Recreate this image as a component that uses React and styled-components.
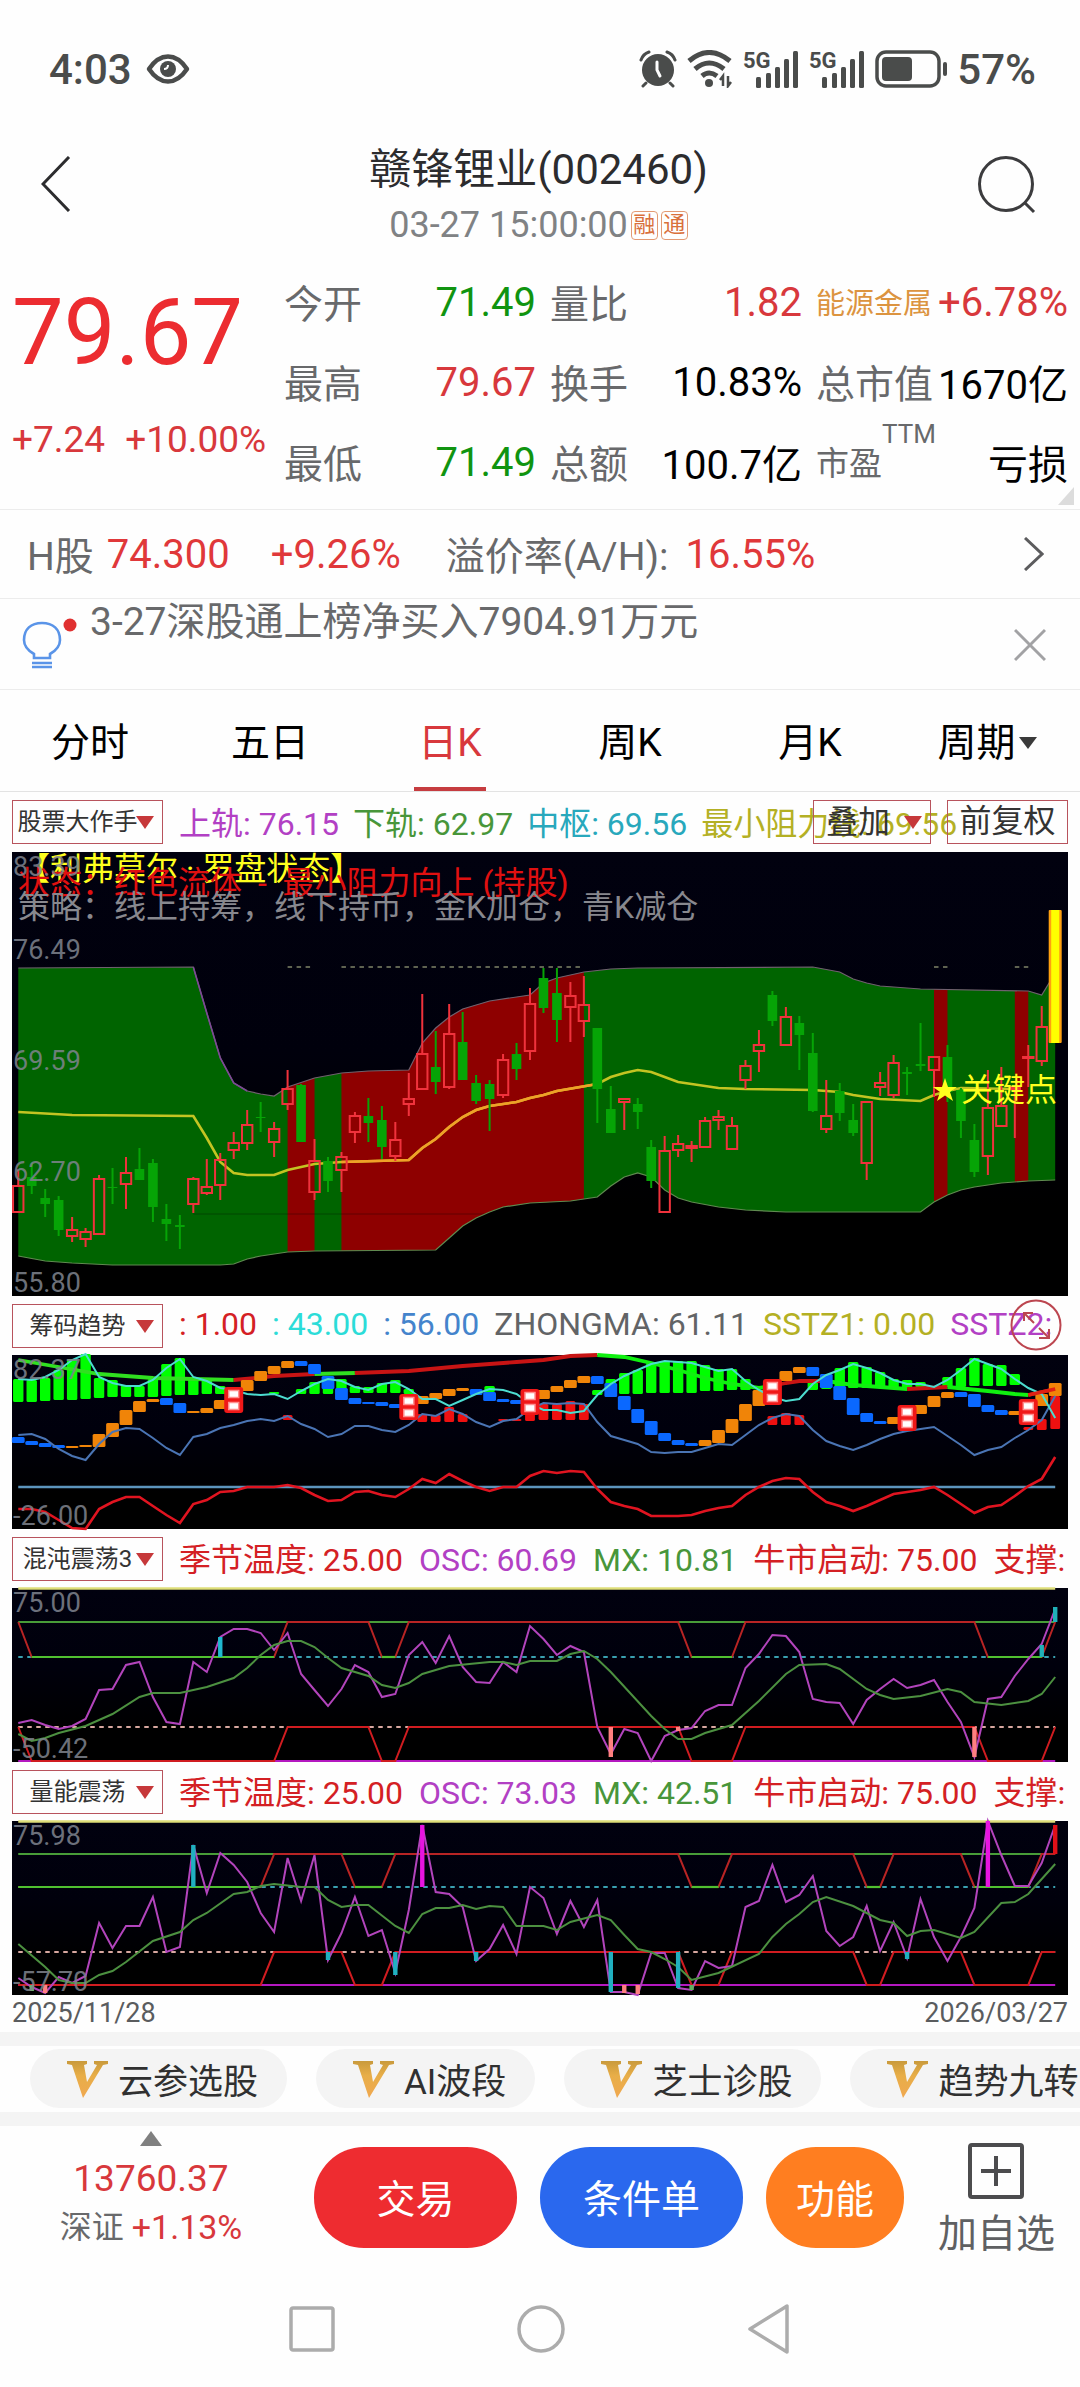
import { useState } from "react";
import styled, { createGlobalStyle, css } from "styled-components";

const GlobalStyle = createGlobalStyle`
    * {
        box-sizing: border-box;
    }
    body {
        margin: 0;
        background: #fefefe;
        color: #000;
        font-family: Roboto, "Noto Sans CJK SC", sans-serif;
    }
    button, select {
        font-family: inherit;
        margin: 0;
    }
`
const Page = styled.div`
    width: 100%;
    overflow: hidden;
`
const PlainButton = styled.button`
    display: flex;
    padding: 0;
    border: none;
    background: none;
    color: inherit;
`

/* status bar */
const StatusBar = styled.div`
    display: flex;
    align-items: center;
    justify-content: space-between;
    height: 138px;
    padding: 0 44px 0 49px;
    color: #4a4c4b;
    font-size: 42px;
    font-weight: 500;
`
const StatusGroup = styled.div`
    display: flex;
    align-items: center;
    gap: ${(props) => props.$gap}px;
`

/* header */
const Header = styled.header`
    display: grid;
    grid-template-columns: 58px 1fr 58px;
    align-items: start;
    height: 122px;
    padding: 0 44px 0 41px;
`
const HeaderButton = styled(PlainButton)`
    padding-top: 18px;
`
const HeaderText = styled.div`
    display: flex;
    flex-direction: column;
    align-items: center;
`
const StockName = styled.h1`
    margin: 0;
    font-size: 42px;
    font-weight: 400;
    line-height: 64px;
    color: #2c2c2e;
`
const StockTime = styled.div`
    display: flex;
    align-items: center;
    gap: 3px;
    font-size: 36px;
    line-height: 46px;
    color: #808284;
`
const Tag = styled.span`
    width: 27px;
    height: 29px;
    border: 1px solid #e39a74;
    border-radius: 4px;
    color: #d9703c;
    font-size: 22px;
    line-height: 26px;
    text-align: center;
`

/* quote */
const Quote = styled.section`
    position: relative;
    display: flex;
    padding: 2px 12px 7px;
    border-bottom: 1px solid #ececec;
`
const PriceBlock = styled.div`
    width: 272px;
    flex: none;
    color: #d8383c;
    white-space: pre;
`
const Price = styled.div`
    color: #ec2c30;
    font-size: 92px;
    line-height: 142px;
`
const Change = styled.div`
    display: flex;
    gap: 20px;
    font-size: 37px;
    line-height: 72px;
`
const QuoteGrid = styled.dl`
    flex: 1;
    display: grid;
    grid-template-columns: repeat(3, 1fr);
    column-gap: 14px;
    margin: 0;
`
const QuoteCell = styled.div`
    display: flex;
    align-items: center;
    justify-content: space-between;
    height: 80px;
    white-space: nowrap;
`
const QuoteLabel = styled.dt`
    display: flex;
    padding-bottom: 3px;
    color: ${(props) => props.$color || "#68696b"};
    font-size: ${(props) => props.$size || 39}px;
`
const QuoteValue = styled.dd`
    margin: 0;
    color: ${(props) => props.$color || "#000"};
    font-size: 40px;
`
const Sup = styled.sup`
    font-size: 26px;
    line-height: 26px;
    margin-top: -16px;
`
const Corner = styled.i`
    position: absolute;
    right: 6px;
    bottom: 4px;
    border-left: 16px solid transparent;
    border-bottom: 18px solid #dcdcdc;
`

/* H share and notice rows */
const HShareRow = styled.div`
    display: flex;
    align-items: center;
    height: 89px;
    padding: 0 36px 0 27px;
    border-bottom: 1px solid #ececec;
    white-space: pre;
`
const HText = styled.span`
    padding-bottom: ${(props) => (props.$muted ? 3 : 0)}px;
    color: ${(props) => (props.$muted ? "#68696b" : "#e0383a")};
    font-size: ${(props) => (props.$muted ? 39 : 40)}px;
    margin-right: ${(props) => props.$gap}px;
`
const Push = styled.span`
    margin-left: auto;
    display: flex;
`
const NoticeRow = styled.div`
    display: flex;
    height: 91px;
    padding: 0 34px 0 20px;
    border-bottom: 1px solid #ececec;
    color: #68696b;
    font-size: 39px;
    line-height: 46px;
`
const NoticeIcon = styled.span`
    width: 70px;
    padding-top: 18px;
`

/* period tabs */
const Tabs = styled.nav`
    display: grid;
    grid-template-columns: repeat(6, 1fr);
    border-bottom: 1px solid #e3e3e3;
`
const Tab = styled.button`
    display: flex;
    align-items: center;
    justify-content: center;
    height: 101px;
    padding: 0 0 3px;
    border: none;
    background: none;
    font-size: 39px;
    color: ${(props) => (props.$active ? "#d8383c" : "#000")};
    ${(props) =>
        props.$active &&
        css`
            background: linear-gradient(#c63c40, #c63c40) center bottom / 72px 4px no-repeat;
        `}
`
const TabArrow = styled.i`
    margin: 8px 6px 0 3px;
    border: 9px solid transparent;
    border-top: 12px solid #3a3a3a;
    border-bottom: none;
`

/* indicator rows */
const IndicatorRow = styled.div`
    position: relative;
    display: flex;
    align-items: center;
    gap: 16px;
    height: ${(props) => (props.$tall ? 60 : 59)}px;
    padding: 0 12px;
    overflow: hidden;
`
const SelectWrap = styled.label`
    position: relative;
    display: block;
    flex: none;
    &::after {
        content: "";
        position: absolute;
        right: 9px;
        top: 16px;
        border: 9px solid transparent;
        border-top: 13px solid #c6383a;
        border-bottom: none;
        pointer-events: none;
    }
`
const boxed = css`
    height: 44px;
    border: 1px solid #b8535c;
    border-radius: 0;
    color: #333;
`
const Select = styled.select`
    ${boxed}
    display: block;
    appearance: none;
    width: ${(props) => (props.$wide ? 118 : 151)}px;
    padding: ${(props) => (props.$wide ? "0 28px 0 0" : "0 22px 0 2px")};
    background: ${(props) => (props.$wide ? "transparent" : "#fefefe")};
    font-size: ${(props) => (props.$wide ? 32 : 24)}px;
    text-align: center;
    text-align-last: center;
`
const Legend = styled.div`
    display: flex;
    align-items: baseline;
    gap: ${(props) => props.$gap}px;
    padding-bottom: 3px;
    font-size: 32px;
    white-space: pre;
`
const LegendItem = styled.span`
    color: ${(props) => props.$color};
`
const RowActions = styled.div`
    position: absolute;
    right: 12px;
    top: 8px;
    display: flex;
    gap: 16px;
`
const BoxButton = styled.button`
    ${boxed}
    width: 121px;
    padding: 0 0 2px;
    background: transparent;
    font-size: 32px;
    line-height: 38px;
`
const ExpandButton = styled(PlainButton)`
    position: absolute;
    right: 18px;
    top: 3px;
`

/* chart panels */
const Panel = styled.div`
    position: relative;
    height: ${(props) => props.$height}px;
    margin: 0 12px;
    background: linear-gradient(#01010f, #00000c 45%, #000 80%);
`
const Plot = styled.svg`
    display: block;
    width: 100%;
    height: 100%;
    overflow: visible;
`
const Axis = styled.div`
    position: absolute;
    inset: 1px auto -1px 1px;
    display: grid;
    grid-auto-rows: 1fr;
    color: #7f848e;
    font-size: 27px;
    line-height: 28px;
    opacity: 0.85;
`
const AxisCell = styled.div`
    display: flex;
    flex-direction: column;
    justify-content: ${(props) => (props.$both ? "space-between" : "flex-end")};
`
const PanelText = styled.div`
    position: absolute;
    left: 6px;
    top: ${(props) => props.$top}px;
    color: ${(props) => props.$color};
    font-size: 32px;
    line-height: 32px;
    white-space: pre;
`
const KeyPoint = styled.div`
    position: absolute;
    right: 11px;
    top: 222px;
    display: flex;
    align-items: center;
    gap: 4px;
    color: #ffff1e;
    font-size: 32px;
    line-height: 32px;
`
const Dates = styled.div`
    display: flex;
    justify-content: space-between;
    padding: 0 12px;
    font-size: 27px;
    line-height: 37px;
    color: #5a5c5e;
`

/* strategy chips */
const Chips = styled.div`
    display: flex;
    gap: 29px;
    padding: 3px 0 4px 30px;
    border-top: 14px solid #f4f4f4;
    border-bottom: 14px solid #f4f4f4;
    overflow: hidden;
`
const Chip = styled.button`
    flex: none;
    display: flex;
    align-items: center;
    gap: 10px;
    height: 59px;
    padding: 0 29px 0 37px;
    border: none;
    border-radius: 30px;
    background: #f4f4f4;
    color: #303030;
    font-size: 35px;
`

/* bottom bar */
const BottomBar = styled.footer`
    display: flex;
    align-items: flex-start;
    height: 145px;
    padding-right: 25px;
`
const Index = styled.div`
    width: 302px;
    flex: none;
    display: flex;
    flex-direction: column;
    align-items: center;
    padding-top: 5px;
    color: #d8383c;
    font-size: 37px;
    line-height: 66px;
`
const UpArrow = styled.i`
    border: 11px solid transparent;
    border-bottom: 15px solid #808080;
    border-top: none;
`
const IndexChange = styled.div`
    display: flex;
    gap: 8px;
    font-size: 34px;
    line-height: 30px;
`
const IndexName = styled.span`
    color: #68696b;
    font-size: 32px;
`
const Actions = styled.div`
    flex: 1;
    display: flex;
    gap: 23px;
    padding: 21px 34px 0 12px;
`
const ActionButton = styled.button`
    flex: ${(props) => props.$grow};
    height: 101px;
    padding: 0 0 3px;
    border: none;
    border-radius: 50px;
    background: ${(props) => props.$color};
    color: #fff;
    font-size: 39px;
`
const AddButton = styled(PlainButton)`
    flex-direction: column;
    align-items: center;
    gap: 6px;
    padding-top: 17px;
    color: #5f6062;
    font-size: 39px;
    line-height: 58px;
`
const NavBar = styled.nav`
    display: flex;
    align-items: center;
    justify-content: center;
    gap: 182px;
    height: 116px;
`

/* chart helpers: one step for every trading day */
const xOf = (i) => 6.25 + i * 13.467;
const toPoints = (list) => list.map(([i, y]) => `${xOf(i).toFixed(1)},${y}`).join(" ");

const RED = "#f0323c";
const GREEN = "#06a406";

// kind, high, body top, body bottom, low
const candles = [
    ["r", 318, 334, 360, 360], ["g", 311, 325, 334, 342], ["g", 337, 346, 352, 365], ["g", 344, 348, 378, 384],
    ["r", 365, 378, 384, 390], ["r", 376, 380, 387, 395], ["r", 323, 327, 382, 382], ["g", 316, 335, 336, 352],
    ["r", 305, 321, 332, 357], ["g", 296, 317, 328, 328], ["g", 307, 311, 355, 370], ["g", 352, 367, 372, 389],
    ["g", 363, 373, 375, 397], ["r", 325, 327, 352, 361], ["r", 307, 335, 341, 343], ["r", 301, 308, 333, 348],
    ["r", 280, 291, 298, 307], ["r", 258, 273, 291, 298], ["g", 250, 265, 266, 280], ["r", 270, 277, 290, 305],
    ["r", 218, 237, 252, 258], ["g", 232, 233, 290, 290], ["r", 287, 309, 340, 348], ["g", 305, 309, 329, 340],
    ["r", 300, 305, 318, 340], ["r", 260, 264, 280, 291], ["g", 246, 264, 271, 290], ["g", 254, 268, 295, 307],
    ["r", 270, 288, 304, 309], ["r", 221, 247, 252, 264], ["r", 142, 202, 237, 237], ["g", 179, 215, 230, 242],
    ["r", 152, 182, 235, 237], ["g", 160, 190, 228, 228], ["g", 223, 231, 249, 252], ["g", 228, 232, 247, 279],
    ["r", 202, 208, 243, 246], ["g", 191, 202, 217, 228], ["r", 136, 152, 199, 208], ["g", 116, 126, 156, 161],
    ["g", 116, 141, 168, 190], ["r", 130, 144, 155, 190], ["r", 124, 153, 169, 185], ["g", 176, 176, 237, 271],
    ["g", 234, 257, 281, 281], ["r", 247, 247, 250, 278], ["g", 246, 252, 260, 277], ["g", 288, 295, 329, 336],
    ["r", 284, 299, 360, 360], ["r", 283, 292, 298, 305], ["r", 289, 294, 296, 310], ["r", 265, 269, 295, 296],
    ["r", 258, 265, 268, 278], ["r", 265, 274, 297, 298], ["r", 208, 214, 228, 237], ["r", 178, 193, 199, 220],
    ["g", 139, 143, 169, 174], ["r", 155, 165, 193, 193], ["g", 164, 171, 183, 218], ["g", 181, 201, 259, 260],
    ["r", 228, 264, 277, 281], ["g", 231, 239, 261, 269], ["g", 252, 268, 281, 284], ["r", 250, 250, 311, 328],
    ["r", 220, 231, 235, 244], ["r", 203, 211, 243, 246], ["g", 215, 220, 222, 243], ["g", 171, 212, 214, 219],
    ["r", 204, 205, 218, 245], ["g", 193, 205, 240, 250], ["g", 236, 238, 269, 286], ["g", 272, 288, 320, 325],
    ["r", 218, 256, 304, 323], ["r", 215, 254, 274, 274], ["r", 235, 235, 237, 286], ["r", 193, 205, 206, 235],
    ["r", 154, 175, 209, 214],
];
const upper = [
    [0, 116], [13, 115], [14, 161], [15, 206], [16, 231], [17, 239], [18, 242], [19, 244], [20, 235], [22, 226],
    [24, 221], [26, 219], [29, 218], [30, 191], [31, 176], [32, 165], [33, 157], [35, 149], [38, 143], [39, 131],
    [40, 126], [42, 120], [44, 117], [46, 116], [59, 115], [61, 120], [62, 127], [63, 131], [64, 134], [67, 137],
    [75, 139], [76, 143], [77, 121],
];
const lower = [
    [0, 404], [2, 409], [4, 411], [7, 413], [15, 413], [16, 412], [17, 407], [18, 404], [20, 400], [22, 399],
    [31, 398], [32, 386], [33, 374], [34, 366], [35, 360], [36, 355], [38, 351], [41, 349], [43, 345], [44, 334],
    [45, 325], [46, 321], [47, 325], [48, 338], [49, 346], [50, 350], [52, 355], [54, 358], [57, 360], [67, 360],
    [68, 350], [69, 343], [70, 338], [71, 335], [73, 331], [75, 329], [77, 328],
];
const middle = [
    [0, 260], [4, 263], [13, 264], [14, 286], [15, 310], [16, 321], [17, 323], [19, 323], [20, 318], [22, 312],
    [24, 310], [29, 308], [30, 296], [31, 287], [32, 275], [33, 265], [34, 258], [35, 254], [37, 250], [38, 246],
    [39, 243], [40, 239], [43, 232], [44, 225], [45, 221], [46, 218], [47, 220], [48, 225], [49, 230], [50, 232],
    [52, 236], [54, 237], [59, 238], [61, 240], [62, 243], [64, 247], [67, 249], [68, 243], [69, 239], [70, 236],
    [74, 237],
];
const redZones = [[20, 22], [24, 42], [68, 69], [74, 75]];

const Candle = ({ i, data }) => {
    const [kind, high, top, bottom, low] = data;
    const x = xOf(i);
    const color = kind === "r" ? RED : GREEN;
    if (kind === "g") {
        return (
            <g stroke={color} strokeWidth="2">
                <path d={`M${x} ${high}V${low}`} />
                <rect x={x - 4.8} y={top} width="9.6" height={bottom - top} fill={color} stroke="none" />
            </g>
        );
    }
    return (
        <g stroke={color} strokeWidth="2" fill="none">
            <path d={`M${x} ${high}V${top}M${x} ${bottom}V${low}`} />
            <rect x={x - 5.2} y={top} width="10.4" height={bottom - top} />
        </g>
    );
};

const MainChart = () => (
    <Plot viewBox="0 0 1056 444" preserveAspectRatio="none">
        <defs>
            <clipPath id="band">
                <polygon points={`${toPoints(upper)} ${toPoints([...lower].reverse())}`} />
            </clipPath>
        </defs>
        <g clipPath="url(#band)">
            <rect width="1056" height="444" fill="#006400" />
            {redZones.map(([from, to]) => (
                <rect key={from} x={xOf(from)} width={xOf(to) - xOf(from)} height="444" fill="#8e0000" />
            ))}
            <path d={`M${xOf(13)} 362H${xOf(35)}`} stroke="#000" strokeOpacity="0.3" />
        </g>
        <g fill="none">
            <polyline points={toPoints(upper)} stroke="#70606f" strokeWidth="1.2" />
            <polyline points={toPoints(upper.slice(1, 6))} stroke="#7c4a94" strokeWidth="1.6" />
            <polyline points={toPoints(lower)} stroke="#5f8a50" strokeWidth="1.2" />
            {redZones.map(([from, to]) => (
                <path key={from} d={`M${xOf(from)} 115H${xOf(to)}`} stroke="#7f8468" strokeWidth="1.6" strokeDasharray="4.5 4.5" />
            ))}
            <polyline points={toPoints(middle)} stroke="#c3c422" strokeWidth="2.6" />
            <polyline points={toPoints(middle.filter(([i]) => i >= 24 && i <= 43))} stroke="#f0a028" strokeWidth="2.6" />
        </g>
        {candles.map((item, i) => <Candle key={i} i={i} data={item} />)}
        <rect x={xOf(77) - 6.5} y="58" width="13" height="133" rx="1" fill="#ffa010" />
        <rect x={xOf(77) - 4} y="58" width="8" height="133" fill="#ffff00" />
    </Plot>
);

const greenBars = [
    [0, 24, 47], [1, 25, 47], [2, 23, 46], [3, 15, 45], [4, 4, 45], [5, -1, 44], [6, 23, 43], [7, 25, 42], [8, 30, 42],
    [9, 31, 42], [10, 24, 42], [11, 9, 41], [12, 3, 40], [13, 22, 40], [14, 24, 39], [15, 31, 39], [19, 37, 39],
    [21, 34, 39], [22, 27, 39], [23, 22, 39], [24, 24, 38], [25, 31, 38], [26, 32, 38], [27, 28, 38], [28, 25, 38],
    [29, 34, 39], [35, 31, 37], [43, 35, 40], [44, 24, 40], [45, 18, 39], [46, 15, 39], [47, 8, 38], [48, 6, 38],
    [49, 6, 38], [50, 6, 38], [51, 10, 36], [52, 14, 36], [53, 14, 35], [54, 24, 35], [59, 25, 35], [60, 19, 34],
    [61, 13, 33], [62, 7, 33], [63, 12, 33], [64, 17, 33], [65, 24, 33], [66, 25, 33], [67, 27, 32], [69, 22, 32],
    [70, 13, 32], [71, 3, 31], [72, 9, 31], [73, 10, 31], [74, 19, 30],
];
const redBars = [
    [20, 60, 65], [30, 59, 67], [31, 60, 67], [32, 52, 67], [33, 59, 67], [36, 64, 66], [37, 64, 66], [38, 58, 66],
    [39, 49, 65], [40, 49, 65], [41, 46, 65], [42, 49, 65], [56, 61, 70], [57, 58, 70], [58, 60, 70], [75, 72, 75],
    [76, 64, 75], [77, 41, 74],
];
const orangeBlocks = [
    [4, 91, 93], [5, 90, 92], [6, 79, 92], [7, 68, 82], [8, 55, 70], [9, 46, 57], [10, 44, 47], [13, 56, 58],
    [14, 53, 58], [15, 45, 54], [17, 25, 36], [18, 16, 26], [19, 11, 19], [20, 6, 13], [30, 41, 49], [31, 38, 44],
    [32, 34, 41], [33, 33, 36], [39, 35, 44], [40, 31, 37], [41, 25, 33], [42, 21, 28], [51, 85, 91], [52, 75, 88],
    [53, 64, 78], [54, 49, 66], [55, 35, 51], [57, 16, 26], [58, 12, 18], [65, 62, 69], [67, 50, 59], [68, 41, 52],
    [69, 37, 43], [74, 56, 60], [76, 39, 51], [77, 28, 41],
];
const blueBlocks = [
    [0, 82, 88], [1, 86, 90], [2, 88, 92], [3, 90, 93], [11, 43, 50], [12, 48, 58], [21, 6, 11], [22, 9, 19],
    [23, 21, 34], [24, 33, 45], [25, 43, 49], [26, 47, 49], [27, 47, 51], [28, 49, 53], [34, 34, 40], [35, 37, 46],
    [36, 44, 47], [37, 45, 49], [43, 21, 29], [44, 28, 42], [45, 41, 55], [46, 54, 68], [47, 66, 80], [48, 78, 86],
    [49, 85, 90], [50, 88, 91], [59, 12, 21], [60, 19, 33], [61, 31, 45], [62, 43, 60], [63, 58, 67], [64, 66, 69],
    [70, 37, 42], [71, 39, 52], [72, 50, 57], [73, 55, 60],
];
const signals = [[16, 32], [29, 39], [38, 34], [56, 24], [66, 50], [75, 44]];
const cyanLine = [
    24, 25, 22, 15, 5, -1, 22, 28, 31, 31, 25, 13, 4, 22, 26, 33, 35, 39, 40, 39, 44, 36, 29, 24, 26, 32, 35, 29, 27,
    34, 44, 44, 51, 45, 39, 34, 35, 39, 49, 55, 55, 58, 56, 40, 29, 21, 15, 9, 6, 7, 8, 12, 16, 14, 26, 35, 42, 46,
    44, 29, 20, 15, 9, 13, 18, 25, 29, 29, 32, 25, 15, 4, 9, 14, 24, 33, 39, 63,
].map((y, i) => [i, y]);
const steelLine = [
    80, 79, 84, 94, 101, 105, 89, 77, 73, 74, 83, 93, 100, 82, 79, 73, 70, 66, 64, 66, 61, 69, 74, 82, 79, 71, 71,
    75, 77, 70, 59, 61, 54, 59, 67, 72, 66, 64, 54, 48, 49, 48, 49, 67, 81, 85, 89, 97, 98, 97, 97, 93, 89, 90, 80,
    70, 63, 59, 61, 75, 86, 91, 95, 90, 84, 79, 76, 74, 72, 81, 90, 100, 95, 92, 83, 75, 65, 41,
].map((y, i) => [i, y]);
const redLine = [
    154, 154, 157, 165, 173, 174, 154, 147, 142, 142, 151, 160, 168, 149, 145, 137, 136, 132, 132, 132, 130, 133,
    140, 146, 145, 137, 136, 140, 142, 134, 124, 128, 119, 126, 132, 136, 132, 132, 121, 116, 118, 116, 117, 134,
    147, 151, 154, 161, 161, 161, 160, 156, 153, 151, 140, 132, 126, 123, 124, 137, 147, 151, 156, 151, 145, 139,
    137, 135, 132, 140, 149, 158, 152, 150, 141, 131, 124, 102,
].map((y, i) => [i, y]);
const trend = [
    ["#30e020", [[0, 5], [3, 12], [6, 19], [10, 23], [16, 25]]],
    ["#c81414", [[16, 25], [19, 21], [22, 19]]],
    ["#30e020", [[22, 19], [25, 18]]],
    ["#c81414", [[25, 18], [29, 16], [33, 11], [37, 7], [39, 5], [41, 1], [43, 0]]],
    ["#10f010", [[43, 0], [45, 2], [47, 8], [49, 15], [51, 23], [53, 29], [55, 33], [56, 31]]],
    ["#c81414", [[56, 31], [57, 28], [58, 26], [60, 26]]],
    ["#10f010", [[60, 26], [62, 30], [66, 34]]],
    ["#c81414", [[66, 34], [69, 32]]],
    ["#10f010", [[69, 32], [72, 36], [74, 39], [75, 40]]],
    ["#e02014", [[75, 40], [77, 34]]],
];

const Bars = ({ list, width, color }) => (
    <g fill={color}>
        {list.map(([i, top, bottom]) => (
            <rect key={i} x={xOf(i) - width / 2} y={top} width={width} height={bottom - top} rx="1.5" />
        ))}
    </g>
);

const ChipChart = () => (
    <Plot viewBox="0 0 1056 174" preserveAspectRatio="none">
        <Bars list={greenBars} width={10.4} color="#00ff00" />
        <Bars list={redBars} width={9.8} color="#ee1010" />
        {trend.map(([color, list], i) => (
            <polyline key={i} points={toPoints(list)} fill="none" stroke={color} strokeWidth="3.8" />
        ))}
        <Bars list={blueBlocks} width={12.8} color="#0a68ff" />
        <Bars list={orangeBlocks} width={12.8} color="#f08408" />
        <g fill="none">
            <polyline points={toPoints(steelLine)} stroke="#4a74b4" strokeWidth="2" />
            <polyline points={toPoints(cyanLine)} stroke="#4cdcd0" strokeWidth="2" />
            <path d={`M${xOf(0)} 132H${xOf(77)}`} stroke="#5c94bc" strokeWidth="2.4" />
            <polyline points={toPoints(redLine)} stroke="#e01420" strokeWidth="2.6" />
            {trend.slice(-1).map(([color, list]) => (
                <polyline key="end" points={toPoints(list)} stroke={color} strokeWidth="3.8" />
            ))}
        </g>
        {signals.map(([i, y]) => (
            <g key={i}>
                <rect x={xOf(i) - 9.5} y={y} width="19" height="26" rx="3" fill="#f01818" />
                <rect x={xOf(i) - 5} y={y + 3.5} width="10" height="7" fill="#fff" stroke="#ff9090" strokeWidth="1.5" />
                <rect x={xOf(i) - 5} y={y + 15.5} width="10" height="7" fill="#fff" stroke="#ff9090" strokeWidth="1.5" />
            </g>
        ))}
    </Plot>
);

const calm = {
    levels: [34, 69, 139, 173],
    steps: [[0, 0], [1, 1], [19, 1], [20, 0], [26, 0], [27, 1], [28, 1], [29, 0], [49, 0], [50, 1], [53, 1], [54, 0], [71, 0], [72, 1], [76, 1], [77, 0]],
    osc: [
        135, 132, 137, 141, 138, 131, 102, 101, 77, 74, 109, 134, 136, 74, 84, 49, 41, 41, 45, 62, 45, 86, 102, 118,
        101, 77, 84, 109, 106, 67, 54, 75, 48, 79, 94, 95, 74, 84, 38, 51, 67, 58, 64, 139, 166, 141, 145, 173, 148,
        142, 140, 123, 117, 117, 80, 66, 47, 48, 64, 111, 114, 115, 136, 112, 101, 91, 100, 97, 92, 114, 134, 169,
        111, 109, 88, 71, 56, 21,
    ].map((y, i) => [i, y]),
    mx: [
        [0, 146], [1, 153], [2, 150], [3, 145], [5, 138], [7, 126], [9, 109], [10, 105], [12, 105], [14, 99], [16, 90],
        [17, 80], [18, 67], [19, 57], [20, 53], [21, 53], [22, 59], [23, 70], [24, 80], [26, 88], [27, 97], [28, 100],
        [29, 95], [30, 86], [32, 78], [35, 74], [36, 74], [37, 77], [38, 73], [40, 73], [41, 66], [42, 63], [43, 71],
        [44, 84], [47, 128], [48, 141], [49, 151], [50, 151], [51, 145], [53, 137], [55, 113], [57, 86], [58, 77],
        [60, 76], [61, 81], [63, 101], [64, 107], [65, 111], [67, 108], [69, 101], [70, 104], [71, 114], [73, 117],
        [75, 113], [76, 106], [77, 89],
    ],
    marks: [[15, 49, 69, "#20b8d0"], [44, 139, 169, "#ff8080"], [49, 139, 143, "#ff8080"], [71, 139, 169, "#ff8080"], [76, 57, 69, "#20b0b8"], [77, 19, 34, "#20b0b8"]],
};
const energy = {
    levels: [33, 66, 131, 164],
    steps: [[0, 1], [18, 1], [19, 0], [24, 0], [25, 1], [27, 1], [28, 0], [49, 0], [50, 1], [52, 1], [53, 0], [62, 0], [63, 1], [64, 1], [65, 0], [70, 0], [71, 1], [75, 1], [76, 0], [77, 0]],
    osc: [
        157, 166, 172, 156, 162, 155, 102, 127, 105, 105, 76, 131, 126, 24, 72, 32, 44, 61, 92, 111, 37, 80, 34, 139,
        112, 76, 115, 109, 152, 89, 4, 71, 73, 86, 140, 128, 104, 133, 66, 77, 113, 80, 106, 79, 171, 171, 174, 132,
        132, 167, 169, 140, 147, 145, 86, 80, 44, 81, 74, 55, 110, 125, 116, 85, 130, 101, 137, 78, 116, 140, 116,
        87, 0, 34, 65, 65, 42, 4,
    ].map((y, i) => [i, y]),
    mx: [
        [0, 123], [2, 146], [3, 159], [4, 162], [5, 162], [6, 154], [7, 150], [8, 141], [10, 120], [12, 111], [13, 99],
        [14, 92], [16, 73], [17, 71], [18, 65], [19, 63], [21, 66], [22, 66], [23, 79], [24, 86], [25, 84], [26, 84],
        [28, 105], [29, 112], [30, 93], [31, 87], [32, 87], [33, 84], [34, 88], [35, 85], [36, 86], [37, 105],
        [39, 105], [40, 109], [41, 101], [43, 94], [44, 99], [45, 114], [46, 128], [47, 131], [48, 138], [49, 146],
        [50, 159], [52, 152], [55, 133], [56, 116], [57, 103], [58, 93], [59, 81], [60, 76], [62, 85], [64, 99],
        [65, 102], [66, 115], [67, 110], [68, 109], [70, 117], [71, 111], [73, 82], [74, 81], [75, 73], [77, 43],
    ],
    marks: [
        [1, 164, 170, "#70b070"], [2, 164, 172, "#ff8080"], [13, 24, 66, "#20b0c0"], [23, 131, 139, "#20b0c0"],
        [28, 131, 154, "#20b0c0"], [30, 4, 66, "#e814e0"], [34, 131, 140, "#20b0c0"], [44, 131, 171, "#20b0c0"],
        [45, 164, 172, "#ff8080"], [46, 164, 173, "#ff8080"], [49, 131, 167, "#20b0c0"], [50, 164, 169, "#60b060"],
        [66, 131, 138, "#20b0c0"], [72, 0, 66, "#e814e0"], [77, 4, 33, "#e01018"],
    ],
};

const WaveChart = ({ data }) => {
    const [top, high, low, bottom] = data.levels;
    const wave = (a, b) => data.steps.map(([i, s]) => [i, s ? b : a]);
    const flats = data.steps.slice(0, -1).filter(([, s], i) => s && data.steps[i + 1][1]);
    const start = xOf(0);
    const end = xOf(77);
    return (
        <Plot viewBox="0 0 1056 174" preserveAspectRatio="none">
            <g fill="none" strokeWidth="2">
                <path d={`M${start} 0.5H${end}`} stroke="#dede78" strokeWidth="2.5" />
                <path d={`M${start} ${top}H${end}`} stroke="#489c38" />
                <path d={`M${start} ${high}H${end}`} stroke="#3aa0b0" strokeDasharray="4.5 4.5" />
                <path d={`M${start} ${low}H${end}`} stroke="#d8a8a0" strokeDasharray="4.5 4.5" />
                <path d={`M${start} ${bottom}H${end}`} stroke="#b418c0" strokeWidth="2.2" />
                <polyline points={toPoints(wave(top, high))} stroke="#b82424" />
                <polyline points={toPoints(wave(low, bottom))} stroke="#d01c20" />
                {flats.map(([i]) => {
                    const next = data.steps.find(([j]) => j > i)[0];
                    return <path key={i} d={`M${xOf(i)} ${high}H${xOf(next)}`} stroke="#50c030" strokeWidth="2.2" />;
                })}
                <polyline points={toPoints(data.osc)} stroke="#b244bc" />
                <polyline points={toPoints(data.mx)} stroke="#4c9040" />
                {data.marks.map(([i, from, to, color]) => (
                    <path key={i} d={`M${xOf(i)} ${from}V${to}`} stroke={color} strokeWidth="4.4" />
                ))}
            </g>
        </Plot>
    );
};

/* icons */
const EyeIcon = () => (
    <svg width="44" height="30" viewBox="0 0 44 30">
        <path d="M3 15C9 6 15 2.500 22 2.500S35 6 41 15C35 24 29 27.500 22 27.500S9 24 3 15Z" fill="none" stroke="#4a4c4b" strokeWidth="4.500" strokeLinejoin="round" />
        <circle cx="22" cy="15" r="8" fill="#4a4c4b" />
        <path d="M22 11c0 3-1 4-4 4" fill="none" stroke="#fefefe" strokeWidth="2" />
    </svg>
);
const AlarmIcon = () => (
    <svg width="38" height="38" viewBox="0 0 38 38" fill="none" stroke="#4a4c4b" strokeLinecap="round">
        <circle cx="19" cy="20" r="16" fill="#4a4c4b" stroke="none" />
        <path d="M2 10Q4 4 10 2M28 2Q34 4 36 10M7 33L4 36M31 33L34 36" strokeWidth="3" />
        <path d="M18 12V20L21 26" stroke="#fefefe" strokeWidth="3" />
    </svg>
);
const WifiIcon = () => (
    <svg width="46" height="38" viewBox="0 0 46 38" fill="none" stroke="#4a4c4b" strokeWidth="5">
        <path d="M2 11Q22 -6 43 11M8 19Q22 7 37 19M15 26Q22 20 30 26" />
        <circle cx="22" cy="33" r="4" fill="#4a4c4b" stroke="none" />
        <path d="M36 36V26L33 30M41 26V36L44 32" strokeWidth="2.500" />
    </svg>
);
const SignalIcon = () => (
    <svg width="56" height="38" viewBox="0 0 56 38" fill="#4a4c4b" overflow="visible">
        <text x="0" y="18" fontSize="22" fontWeight="700">5G</text>
        <rect x="13" y="27" width="5" height="11" rx="1.500" />
        <rect x="23" y="23" width="5" height="15" rx="1.500" />
        <rect x="32" y="17" width="5" height="21" rx="1.500" />
        <rect x="41" y="9" width="5" height="29" rx="1.500" />
        <rect x="50" y="1" width="5" height="37" rx="1.500" />
    </svg>
);
const BatteryIcon = () => (
    <svg width="72" height="38" viewBox="0 0 72 38">
        <rect x="2" y="2" width="62" height="34" rx="9" fill="none" stroke="#4a4c4b" strokeWidth="3.500" />
        <rect x="7" y="7" width="30" height="24" rx="4" fill="#4a4c4b" />
        <rect x="68" y="12" width="4" height="14" rx="2" fill="#4a4c4b" />
    </svg>
);
const BulbIcon = () => (
    <svg width="58" height="54" viewBox="0 0 58 54" fill="none" stroke="#5a94e8" strokeWidth="2.600">
        <path d="M14 41V37C7 33 4 28 4 23C4 12 11 6 22 6S40 12 40 23C40 28 37 33 30 37V41Z" />
        <path d="M12 46H32M12 50H32" />
        <circle cx="50" cy="8" r="6.500" fill="#e03030" stroke="none" />
    </svg>
);
const VIcon = () => (
    <svg width="41" height="38" viewBox="0 0 41 38">
        <defs>
            <linearGradient id="gold" x1="0" x2="0" y1="0" y2="1">
                <stop offset="0" stopColor="#c99a3c" />
                <stop offset="0.400" stopColor="#e8ae48" />
                <stop offset="1" stopColor="#f0a850" />
            </linearGradient>
        </defs>
        <path d="M0 1H20V4L17 5L20 22L30 5L27 4V1H41V4L36 5L16 38L5 5L0 4Z" fill="url(#gold)" />
    </svg>
);

const quotes = [
    { label: "今开", value: "71.49", color: "#109410" },
    { label: "量比", value: "1.82", color: "#d8383c" },
    { label: "能源金属", value: "+6.78%", color: "#d8383c", labelColor: "#dc9440", size: 29 },
    { label: "最高", value: "79.67", color: "#d8383c" },
    { label: "换手", value: "10.83%" },
    { label: "总市值", value: "1670亿" },
    { label: "最低", value: "71.49", color: "#109410" },
    { label: "总额", value: "100.7亿" },
    { label: "市盈", value: "亏损", size: 33, sup: "TTM" },
];
const tabs = ["分时", "五日", "日K", "周K", "月K", "周期"];
const PURPLE = "#b240c4";
const waveLegend = (osc, mx) => [
    ["季节温度: 25.00", "#d42024"],
    [`OSC: ${osc}`, PURPLE],
    [`MX: ${mx}`, "#48963a"],
    ["牛市启动: 75.00", "#d42024"],
    ["支撑:", "#d42024"],
];

const Indicator = ({ name, legend, gap, tall, children }) => (
    <IndicatorRow $tall={tall}>
        <SelectWrap>
            <Select aria-label="指标" defaultValue={name}>
                <option>{name}</option>
            </Select>
        </SelectWrap>
        <Legend $gap={gap}>
            {legend.map(([text, color]) => <LegendItem key={text} $color={color}>{text}</LegendItem>)}
        </Legend>
        {children}
    </IndicatorRow>
);

const SmallAxis = ({ top, bottom }) => (
    <Axis>
        <AxisCell $both><span>{top}</span><span>{bottom}</span></AxisCell>
    </Axis>
);

const App = () => {
    const [active, setActive] = useState("日K");

    return (
        <Page>
            <GlobalStyle />
            <StatusBar>
                <StatusGroup $gap={14}>
                    <span>4:03</span>
                    <EyeIcon />
                </StatusGroup>
                <StatusGroup $gap={10}>
                    <AlarmIcon />
                    <WifiIcon />
                    <SignalIcon />
                    <SignalIcon />
                    <BatteryIcon />
                    <span>57%</span>
                </StatusGroup>
            </StatusBar>

            <Header>
                <HeaderButton aria-label="返回">
                    <svg width="30" height="56" viewBox="0 0 30 56" fill="none" stroke="#2c2c2e" strokeWidth="3">
                        <path d="M28 1L2 28L28 55" />
                    </svg>
                </HeaderButton>
                <HeaderText>
                    <StockName>赣锋锂业(002460)</StockName>
                    <StockTime>
                        <time>03-27 15:00:00</time>
                        <Tag>融</Tag>
                        <Tag>通</Tag>
                    </StockTime>
                </HeaderText>
                <HeaderButton aria-label="搜索">
                    <svg width="58" height="58" viewBox="0 0 58 58" fill="none" stroke="#3c3c3e" strokeWidth="3">
                        <circle cx="28" cy="28" r="26.500" />
                        <path d="M47 47L56 56" />
                    </svg>
                </HeaderButton>
            </Header>

            <Quote>
                <PriceBlock>
                    <Price>79.67</Price>
                    <Change><span>+7.24</span><span>+10.00%</span></Change>
                </PriceBlock>
                <QuoteGrid>
                    {quotes.map((item) => (
                        <QuoteCell key={item.label}>
                            <QuoteLabel $color={item.labelColor} $size={item.size}>
                                {item.label}
                                {item.sup && <Sup>{item.sup}</Sup>}
                            </QuoteLabel>
                            <QuoteValue $color={item.color}>{item.value}</QuoteValue>
                        </QuoteCell>
                    ))}
                </QuoteGrid>
                <Corner />
            </Quote>

            <HShareRow>
                <HText $muted $gap={13}>H股</HText>
                <HText $gap={41}>74.300</HText>
                <HText $gap={45}>+9.26%</HText>
                <HText $muted $gap={17}>溢价率(A/H):</HText>
                <HText>16.55%</HText>
                <Push>
                    <svg width="20" height="34" viewBox="0 0 20 34" fill="none" stroke="#5c5c5e" strokeWidth="3">
                        <path d="M1 1L18 17L1 33" />
                    </svg>
                </Push>
            </HShareRow>

            <NoticeRow>
                <NoticeIcon><BulbIcon /></NoticeIcon>
                <span>3-27深股通上榜净买入7904.91万元</span>
                <Push>
                    <PlainButton aria-label="关闭">
                        <svg width="32" height="92" viewBox="0 0 32 92" fill="none" stroke="#a2a2a4" strokeWidth="3">
                            <path d="M1 31L31 61M31 31L1 61" />
                        </svg>
                    </PlainButton>
                </Push>
            </NoticeRow>

            <Tabs>
                {tabs.map((name) => (
                    <Tab key={name} $active={name === active} onClick={() => setActive(name)}>
                        {name}
                        {name === "周期" && <TabArrow />}
                    </Tab>
                ))}
            </Tabs>

            <Indicator
                tall
                name="股票大作手"
                gap={14}
                legend={[
                    ["上轨: 76.15", PURPLE],
                    ["下轨: 62.97", "#48963a"],
                    ["中枢: 69.56", "#28a8bc"],
                    ["最小阻力线: 69.56", "#b4b024"],
                ]}
            >
                <RowActions>
                    <SelectWrap>
                        <Select $wide aria-label="叠加" defaultValue="叠加">
                            <option>叠加</option>
                        </Select>
                    </SelectWrap>
                    <BoxButton>前复权</BoxButton>
                </RowActions>
            </Indicator>
            <Panel $height={444}>
                <MainChart />
                <KeyPoint>
                    <svg width="24" height="24" viewBox="0 0 24 24" fill="#ffff1e">
                        <path d="M12 0L15 9H24L17 14L20 23L12 17.500L4 23L7 14L0 9H9Z" />
                    </svg>
                    关键点
                </KeyPoint>
                <PanelText $top={1} $color="#ffff1e">【利弗莫尔 · 罗盘状态】</PanelText>
                <PanelText $top={15} $color="#e01010">状态：红色流体  -  最小阻力向上 (持股)</PanelText>
                <PanelText $top={39} $color="#88888e">策略：线上持筹，线下持币，金K加仓，青K减仓</PanelText>
                <Axis>
                    <AxisCell $both><span>83.39</span><span>76.49</span></AxisCell>
                    <AxisCell>69.59</AxisCell>
                    <AxisCell>62.70</AxisCell>
                    <AxisCell>55.80</AxisCell>
                </Axis>
            </Panel>

            <Indicator
                name="筹码趋势"
                gap={15}
                legend={[
                    [": 1.00", "#d42024"],
                    [": 43.00", "#2cdcd8"],
                    [": 56.00", "#4484cc"],
                    ["ZHONGMA: 61.11", "#626466"],
                    ["SSTZ1: 0.00", "#b4b024"],
                    ["SSTZ2:", PURPLE],
                ]}
            >
                <ExpandButton aria-label="全屏">
                    <svg width="52" height="52" viewBox="0 0 52 52" fill="none" stroke="#bc4650" strokeWidth="2">
                        <circle cx="26" cy="26" r="24.500" />
                        <path d="M24 24L14 14M14 22V14H23M29 29L39 39M39 30V39H29" />
                    </svg>
                </ExpandButton>
            </Indicator>
            <Panel $height={174}>
                <ChipChart />
                <SmallAxis top="82.37" bottom="-26.00" />
            </Panel>

            <Indicator name="混沌震荡3" gap={16} legend={waveLegend("60.69", "10.81")} />
            <Panel $height={174}>
                <WaveChart data={calm} />
                <SmallAxis top="75.00" bottom="-50.42" />
            </Panel>

            <Indicator name="量能震荡" gap={16} legend={waveLegend("73.03", "42.51")} />
            <Panel $height={174}>
                <WaveChart data={energy} />
                <SmallAxis top="75.98" bottom="-57.70" />
            </Panel>
            <Dates>
                <time>2025/11/28</time>
                <time>2026/03/27</time>
            </Dates>

            <Chips>
                {["云参选股", "AI波段", "芝士诊股", "趋势九转"].map((name) => (
                    <Chip key={name}><VIcon />{name}</Chip>
                ))}
            </Chips>

            <BottomBar>
                <Index>
                    <UpArrow />
                    <div>13760.37</div>
                    <IndexChange>
                        <IndexName>深证</IndexName>
                        <span>+1.13%</span>
                    </IndexChange>
                </Index>
                <Actions>
                    <ActionButton $grow={203} $color="#ee2c30">交易</ActionButton>
                    <ActionButton $grow={203} $color="#2a68ee">条件单</ActionButton>
                    <ActionButton $grow={138} $color="#ff7e20">功能</ActionButton>
                </Actions>
                <AddButton>
                    <svg width="56" height="56" viewBox="0 0 56 56" fill="none" stroke="#4c4c4e" strokeWidth="4">
                        <rect x="2" y="2" width="52" height="52" rx="2" />
                        <path d="M28 13V43M13 28H43" />
                    </svg>
                    加自选
                </AddButton>
            </BottomBar>

            <NavBar>
                <PlainButton aria-label="最近任务">
                    <svg width="46" height="46" viewBox="0 0 46 46" fill="none" stroke="#acacac" strokeWidth="3.500">
                        <rect x="2" y="2" width="42" height="42" rx="2" />
                    </svg>
                </PlainButton>
                <PlainButton aria-label="主页">
                    <svg width="48" height="48" viewBox="0 0 48 48" fill="none" stroke="#acacac" strokeWidth="3.500">
                        <circle cx="24" cy="24" r="22" />
                    </svg>
                </PlainButton>
                <PlainButton aria-label="后退">
                    <svg width="44" height="50" viewBox="0 0 44 50" fill="none" stroke="#acacac" strokeWidth="3.500" strokeLinejoin="round">
                        <path d="M40 2V48L3 25Z" />
                    </svg>
                </PlainButton>
            </NavBar>
        </Page>
    );
};

export default App;
